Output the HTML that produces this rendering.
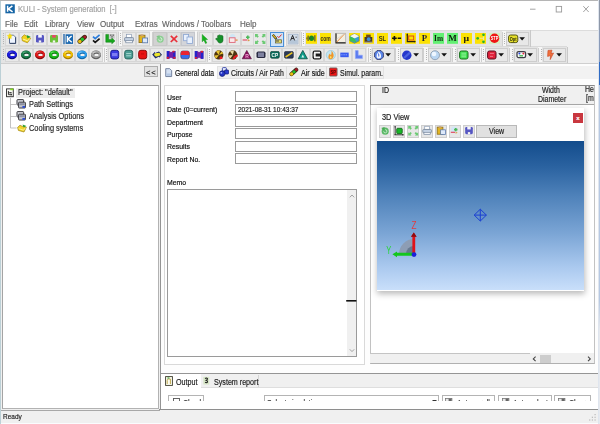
<!DOCTYPE html>
<html lang="en"><head><meta charset="utf-8"><title>KULI - System generation</title><style>
html,body{margin:0;padding:0}
body{width:600px;height:424px;overflow:hidden;position:relative;background:#f0f0f0;font-family:"Liberation Sans",sans-serif}
.b{position:absolute}
.t{position:absolute;white-space:nowrap;line-height:1;transform-origin:0 0;display:block;-webkit-text-stroke:.18px currentColor}
.i{position:absolute;overflow:visible;filter:blur(.35px)}
.g{position:absolute;width:1px;background:repeating-linear-gradient(#b4b4b4 0,#b4b4b4 1px,transparent 1px,transparent 2px)}
</style></head><body>
<div class="b" style="left:0px;top:0px;width:600px;height:30px;background:#fff;"></div>
<div class="b" style="left:0px;top:0px;width:600px;height:1px;background:#b5b5b5;"></div>
<svg class="i" style="left:5px;top:4px" width="10" height="10" viewBox="0 0 10 10"><rect x=".4" y=".3" width="9.4" height="9" fill="#1464a5"/><path d="M2.6 1.8V7.8M7.4 1.8L3.4 4.9L7.6 7.8" stroke="#fff" stroke-width="1.5" fill="none"/></svg>
<span class="t" style="left:18px;top:4.98px;font-size:9.0px;color:#a2a2a2;transform:scaleX(0.85);">KULI - System generation &nbsp;[-]</span>
<svg class="i" style="left:525px;top:2px" width="70" height="14" viewBox="0 0 70 14"><g stroke="#9a9a9a" stroke-width="0.9" fill="none"><path d="M5 7.2H10.5"/><rect x="31.2" y="4.4" width="5.4" height="5.6"/><path d="M58.3 4.2L63.7 10M63.7 4.2L58.3 10"/></g></svg>
<span class="t" style="left:4.7px;top:20.00px;font-size:8.5px;color:#666;transform:scaleX(0.94);">File</span>
<span class="t" style="left:24.2px;top:20.00px;font-size:8.5px;color:#666;transform:scaleX(0.94);">Edit</span>
<span class="t" style="left:45.2px;top:20.00px;font-size:8.5px;color:#666;transform:scaleX(0.94);">Library</span>
<span class="t" style="left:76.6px;top:20.00px;font-size:8.5px;color:#666;transform:scaleX(0.94);">View</span>
<span class="t" style="left:100px;top:20.00px;font-size:8.5px;color:#666;transform:scaleX(0.94);">Output</span>
<span class="t" style="left:134.6px;top:20.00px;font-size:8.5px;color:#666;transform:scaleX(0.94);">Extras</span>
<span class="t" style="left:162.4px;top:20.00px;font-size:8.5px;color:#666;transform:scaleX(0.94);">Windows / Toolbars</span>
<span class="t" style="left:240px;top:20.00px;font-size:8.5px;color:#666;transform:scaleX(0.94);">Help</span>
<div class="b" style="left:0px;top:30px;width:600px;height:33px;background:#f0f0f0;"></div>
<div class="b" style="left:0px;top:30px;width:531px;height:16.5px;background:#e4e4e4;"></div>
<div class="b" style="left:0px;top:46.5px;width:567px;height:16px;background:#e4e4e4;"></div>
<div class="b" style="left:0px;top:30px;width:600px;height:1px;background:#dcdcdc;"></div>
<div class="b" style="left:0px;top:62.6px;width:600px;height:1px;background:#cfcfcf;"></div>
<div class="b" style="left:0px;top:46.3px;width:567px;height:0.8px;background:#dadada;"></div>
<div class="b" style="left:530.4px;top:30px;width:1px;height:16.5px;background:#c8c8c8;"></div>
<div class="b" style="left:566.6px;top:46.5px;width:1px;height:16px;background:#c8c8c8;"></div>
<div class="b" style="left:118.6px;top:31px;width:3.6px;height:15px;background:#f6f6f6;"></div>
<div class="b" style="left:150.2px;top:31px;width:2.8px;height:15px;background:#f6f6f6;"></div>
<div class="b" style="left:195px;top:31px;width:2.4px;height:15px;background:#f6f6f6;"></div>
<div class="b" style="left:284.6px;top:31px;width:2.2px;height:15px;background:#f6f6f6;"></div>
<div class="b" style="left:300.6px;top:31px;width:4.6px;height:15px;background:#f6f6f6;"></div>
<div class="b" style="left:502.4px;top:31px;width:4px;height:15px;background:#f6f6f6;"></div>
<div class="b" style="left:103px;top:47.2px;width:4px;height:15px;background:#f6f6f6;"></div>
<div class="b" style="left:206.6px;top:47.2px;width:4.2px;height:15px;background:#f6f6f6;"></div>
<div class="b" style="left:367px;top:47.2px;width:3.6px;height:15px;background:#f6f6f6;"></div>
<div class="b" style="left:395px;top:47.2px;width:4.6px;height:15px;background:#f6f6f6;"></div>
<div class="b" style="left:423px;top:47.2px;width:4.6px;height:15px;background:#f6f6f6;"></div>
<div class="b" style="left:451.6px;top:47.2px;width:4.4px;height:15px;background:#f6f6f6;"></div>
<div class="b" style="left:480.4px;top:47.2px;width:4.6px;height:15px;background:#f6f6f6;"></div>
<div class="b" style="left:508.8px;top:47.2px;width:4.6px;height:15px;background:#f6f6f6;"></div>
<div class="b" style="left:537.6px;top:47.2px;width:4.6px;height:15px;background:#f6f6f6;"></div>
<div class="g" style="left:3px;top:33.0px;height:11px"></div>
<div class="b" style="left:5px;top:32.0px;width:14px;height:14px;background:#e9e9e9;border:0.6px solid #d6d6d6;box-sizing:border-box;"></div>
<svg class="i" style="left:7px;top:33.5px" width="10" height="11" viewBox="0 0 10 11"><path d="M2.5 1.2H6.6L8.6 3.2V9.4H2.5Z" fill="#eef4ff" stroke="#56688c" stroke-width=".9"/><path d="M8.6 3.4V9.4H3" stroke="#3a4a6a" stroke-width="1" fill="none"/><path d="M2.8 -.4L3.6 1.2L5.2 1.6L4 2.8L4.2 4.6L2.8 3.8L1.2 4.6L1.6 2.8L.4 1.6L2 1.2Z" fill="#f6dc10" stroke="#f6dc10" stroke-width=".6"/></svg>
<div class="b" style="left:19px;top:32.0px;width:14px;height:14px;background:#e9e9e9;border:0.6px solid #d6d6d6;box-sizing:border-box;"></div>
<svg class="i" style="left:21px;top:33.5px" width="10" height="11" viewBox="0 0 10 11"><path d="M.8 3.2L3.4 .8L5.6 2.2L9.8 4.2L6.4 8.8L1.4 6.8Z" fill="#f2d31e" stroke="#a88a10" stroke-width=".7"/><path d="M1.8 5L6.6 6.8L8.8 4.6" stroke="#fff8b0" stroke-width=".9" fill="none"/><path d="M5.6 1L9.6 2.8L6.4 4.6Z" fill="#23a02c"/></svg>
<div class="b" style="left:33px;top:32.0px;width:14px;height:14px;background:#e9e9e9;border:0.6px solid #d6d6d6;box-sizing:border-box;"></div>
<svg class="i" style="left:35px;top:33.5px" width="10" height="11" viewBox="0 0 10 11"><rect x="1" y="1" width="8" height="7.6" rx="1.4" fill="#5656c2"/><rect x="3.2" y="1" width="3.6" height="2.6" fill="#f4f4ff"/><rect x="3.8" y="6.4" width="2.4" height="2.2" fill="#f4f4f4"/></svg>
<div class="b" style="left:47px;top:32.0px;width:14px;height:14px;background:#e9e9e9;border:0.6px solid #d6d6d6;box-sizing:border-box;"></div>
<svg class="i" style="left:49px;top:33.5px" width="10" height="11" viewBox="0 0 10 11"><rect x="1" y="1" width="8" height="7.6" rx="1.4" fill="#6cc038"/><rect x="3.2" y="1" width="3.6" height="2.6" fill="#e8486a"/><rect x="3.8" y="6.4" width="2.4" height="2.2" fill="#f4f4f4"/></svg>
<div class="b" style="left:61px;top:32.0px;width:14px;height:14px;background:#e9e9e9;border:0.6px solid #d6d6d6;box-sizing:border-box;"></div>
<svg class="i" style="left:63px;top:33.5px" width="10" height="11" viewBox="0 0 10 11"><rect x=".4" y="0" width="1.2" height="10.2" fill="#0f5aa5"/><rect x="2.6" y=".3" width="7.4" height="9.6" fill="#1767b0"/><path d="M4.4 2V8.2M8.6 2L5 5.1L8.8 8.2" stroke="#fff" stroke-width="1.4" fill="none"/></svg>
<div class="b" style="left:75px;top:32.0px;width:14px;height:14px;background:#e9e9e9;border:0.6px solid #d6d6d6;box-sizing:border-box;"></div>
<svg class="i" style="left:77px;top:33.5px" width="10" height="11" viewBox="0 0 10 11"><path d="M2.7 7.5L7.7 3" stroke="#3a2a12" stroke-width="4.4" stroke-linecap="round"/><circle cx="7.8" cy="2.9" r="1.5" fill="#a8162a"/><circle cx="5.3" cy="5.2" r="1.8" fill="#22c02e"/><circle cx="2.8" cy="7.5" r="1.8" fill="#e8c014"/></svg>
<div class="b" style="left:89px;top:32.0px;width:14px;height:14px;background:#e9e9e9;border:0.6px solid #d6d6d6;box-sizing:border-box;"></div>
<svg class="i" style="left:91px;top:33.5px" width="10" height="11" viewBox="0 0 10 11"><path d="M2 2.6L4.2 4.6L8.6 .9" stroke="#2a7cdc" stroke-width="1.7" fill="none"/><path d="M2 6.3L4.2 8.3L8.6 4.6" stroke="#151515" stroke-width="1.7" fill="none"/></svg>
<div class="b" style="left:103px;top:32.0px;width:14px;height:14px;background:#e9e9e9;border:0.6px solid #d6d6d6;box-sizing:border-box;"></div>
<svg class="i" style="left:105px;top:33.5px" width="10" height="11" viewBox="0 0 10 11"><rect x="4.4" y="0" width="5.2" height="4.6" fill="#c4c4c4"/><path d="M5 .6h1.4v1.4H5zM7.6 .6H9V2H7.6zM6.3 2h1.4v1.4H6.3z" fill="#7a7a7a"/><path d="M.8 .4H3.6V5.6H6.8V4L10 6.9L6.8 9.8V8.2H.8Z" fill="#17a81d" stroke="#0c7a12" stroke-width=".5"/></svg>
<div class="b" style="left:118.3px;top:31.5px;width:1px;height:14px;background:#cfcfcf;"></div>
<div class="g" style="left:120px;top:33.0px;height:11px"></div>
<div class="b" style="left:122px;top:32.0px;width:14px;height:14px;background:#e9e9e9;border:0.6px solid #d6d6d6;box-sizing:border-box;"></div>
<svg class="i" style="left:124px;top:33.5px" width="10" height="11" viewBox="0 0 10 11"><rect x="2.6" y=".3" width="5" height="3.6" fill="#fff" stroke="#8b9bb3" stroke-width=".7"/><rect x=".6" y="3.6" width="9" height="3.6" rx=".8" fill="#c5d2e3" stroke="#69798f" stroke-width=".7"/><rect x="1.8" y="6.6" width="6.6" height="2.2" fill="#f1f4f9" stroke="#7a8aa0" stroke-width=".7"/></svg>
<div class="b" style="left:136px;top:32.0px;width:14px;height:14px;background:#e9e9e9;border:0.6px solid #d6d6d6;box-sizing:border-box;"></div>
<svg class="i" style="left:138px;top:33.5px" width="10" height="11" viewBox="0 0 10 11"><rect x="1" y="1.2" width="6" height="7.4" fill="#e2b422" stroke="#8c6c12" stroke-width=".8"/><rect x="2.6" y=".4" width="2.8" height="1.8" fill="#caa06a"/><rect x="4.6" y="4" width="5" height="4.8" fill="#dde9fa" stroke="#5878ae" stroke-width=".8"/></svg>
<div class="b" style="left:151.5px;top:31.5px;width:1px;height:14px;background:#cfcfcf;"></div>
<div class="b" style="left:153.5px;top:32px;width:13px;height:14px;background:#d4d4d4;border:0.6px solid #cfcfcf;box-sizing:border-box;"></div>
<div class="b" style="left:181px;top:32px;width:13.4px;height:14px;background:#d3d5da;border:0.6px solid #c6c8cc;box-sizing:border-box;"></div>
<div class="b" style="left:167.5px;top:32px;width:13px;height:14px;background:#e0e0e0;border:0.6px solid #d2d2d2;box-sizing:border-box;"></div>
<div class="b" style="left:153px;top:32.0px;width:14px;height:14px;background:#d2d2d2;border:0.6px solid #c8c8c8;box-sizing:border-box;"></div>
<svg class="i" style="left:155px;top:33.5px" width="10" height="11" viewBox="0 0 10 11"><circle cx="5.2" cy="5.2" r="3.5" fill="#8ccf92"/><path d="M3.7 5.4A1.6 1.6 0 1 0 5.2 3.7" stroke="#d8f0da" stroke-width="1" fill="none"/><path d="M1.2 2.2L4.6 1.2L4.2 4.2Z" fill="#7cc684"/></svg>
<div class="b" style="left:167px;top:32.0px;width:14px;height:14px;background:#e0e0e0;border:0.6px solid #d0d0d0;box-sizing:border-box;"></div>
<svg class="i" style="left:169px;top:33.5px" width="10" height="11" viewBox="0 0 10 11"><path d="M1.8 1.8L8.2 8M8.2 1.8L1.8 8" stroke="#e8303a" stroke-width="1.7" fill="none"/></svg>
<div class="b" style="left:181px;top:32.0px;width:14px;height:14px;background:#d3d5da;border:0.6px solid #c4c6cc;box-sizing:border-box;"></div>
<svg class="i" style="left:183px;top:33.5px" width="10" height="11" viewBox="0 0 10 11"><rect x=".6" y=".5" width="5" height="6.2" fill="#e9f1fd" stroke="#8aa5d2" stroke-width=".8"/><rect x="4" y="3" width="5.4" height="6.4" fill="#e9f1fd" stroke="#8aa5d2" stroke-width=".8"/></svg>
<div class="b" style="left:196.5px;top:31.5px;width:1px;height:14px;background:#cfcfcf;"></div>
<div class="b" style="left:199px;top:32.0px;width:14px;height:14px;background:#e9e9e9;border:0.6px solid #d6d6d6;box-sizing:border-box;"></div>
<svg class="i" style="left:201px;top:33.5px" width="10" height="11" viewBox="0 0 10 11"><path d="M1.2 .4V7.8L2.9 6.2L4.5 9.6L5.8 9L4.3 5.7L6.6 5.5Z" fill="#16b31c" stroke="#0d8a14" stroke-width=".4"/></svg>
<div class="b" style="left:213px;top:32.0px;width:14px;height:14px;background:#e9e9e9;border:0.6px solid #d6d6d6;box-sizing:border-box;"></div>
<svg class="i" style="left:215px;top:33.5px" width="10" height="11" viewBox="0 0 10 11"><path d="M2.6 3.2V1.8Q3.2 .6 4 1.6Q4.6 -.2 5.4 1.4Q6.2 .2 6.8 1.8Q7.6 1.2 8 2.6V6.4Q7.8 8.8 5.6 9H4.6Q3 8.6 2.4 6.8L.6 5Q.8 3.6 2.6 4.6Z" fill="#17912a" stroke="#0b5a16" stroke-width=".5"/></svg>
<div class="b" style="left:227px;top:32.0px;width:14px;height:14px;background:#e9e9e9;border:0.6px solid #d6d6d6;box-sizing:border-box;"></div>
<svg class="i" style="left:229px;top:33.5px" width="10" height="11" viewBox="0 0 10 11"><circle cx="3.6" cy="2.6" r="2.6" fill="#cfe6f5"/><rect x=".3" y="3.8" width="5.8" height="4.6" fill="#fbe9ec" stroke="#de6476" stroke-width=".9"/><path d="M6.4 6.1H8.6" stroke="#e08a3a" stroke-width="1.2"/></svg>
<div class="b" style="left:241px;top:32.0px;width:14px;height:14px;background:#e9e9e9;border:0.6px solid #d6d6d6;box-sizing:border-box;"></div>
<svg class="i" style="left:243px;top:33.5px" width="10" height="11" viewBox="0 0 10 11"><path d="M-.4 6H4.4" stroke="#e2485c" stroke-width="1.1"/><path d="M4.8 1.4V5M3 3.2H6.6" stroke="#4cb85a" stroke-width="1.6"/><path d="M4.8 5L7 6.6L4.8 7.6Z" fill="#d8a04a"/></svg>
<div class="b" style="left:253.2px;top:32.0px;width:14px;height:14px;background:#e9e9e9;border:0.6px solid #d6d6d6;box-sizing:border-box;"></div>
<svg class="i" style="left:255.2px;top:33.5px" width="10" height="11" viewBox="0 0 10 11"><g fill="#6cca74"><path d="M0 0H3.4L2.4 1L3.8 2.4L2.4 3.8L1 2.4L0 3.4Z"/><path d="M10.4 0H7L8 1L6.6 2.4L8 3.8L9.4 2.4L10.4 3.4Z"/><path d="M0 10H3.4L2.4 9L3.8 7.6L2.4 6.2L1 7.6L0 6.6Z"/><path d="M10.4 10H7L8 9L6.6 7.6L8 6.2L9.4 7.6L10.4 6.6Z"/></g></svg>
<div class="b" style="left:269.5px;top:31.5px;width:14px;height:15px;background:#cfe4f7;border:1px solid #4a90d9;box-sizing:border-box;"></div>
<svg class="i" style="left:271.5px;top:33.5px" width="10" height="11" viewBox="0 0 10 11"><path d="M.8 .8L4.4 5" stroke="#2a2a1a" stroke-width="2.4"/><path d="M1 1L4 4.4" stroke="#e4bb22" stroke-width="1.3"/><path d="M5.4 2.2L6.8 3.6L9.6 .5" stroke="#e02626" stroke-width="1" fill="none"/><rect x="3.4" y="5.8" width="6.2" height="3.2" fill="#ece070" stroke="#5a5a3a" stroke-width=".7"/><path d="M4 7H7" stroke="#333" stroke-width=".9"/></svg>
<div class="b" style="left:285.5px;top:31.5px;width:1px;height:14px;background:#cfcfcf;"></div>
<div class="b" style="left:286px;top:32.0px;width:14px;height:14px;background:#e9e9e9;border:0.6px solid #d6d6d6;box-sizing:border-box;"></div>
<svg class="i" style="left:288px;top:33.5px" width="10" height="11" viewBox="0 0 10 11"><rect x=".2" y=".2" width="9.8" height="9.8" fill="#d6dfea" stroke="#9aacc4" stroke-width=".7"/><rect x=".6" y="6" width="9" height="3.6" fill="#b6c6d8"/><path d="M2.6 6.4L4.6 1.4L6.6 6.4M3.4 4.6H5.8" stroke="#111" stroke-width=".9" fill="none"/><path d="M7.4 3.2H9" stroke="#333" stroke-width=".7"/></svg>
<div class="b" style="left:300.5px;top:31.5px;width:1px;height:14px;background:#cfcfcf;"></div>
<div class="g" style="left:302.5px;top:33.0px;height:11px"></div>
<svg class="i" style="left:305.5px;top:33.0px" width="12" height="12" viewBox="0 0 12 12"><rect x="0" y="0" width="11" height="10.8" fill="#fce203"/><g transform="translate(-.5 0)"><ellipse cx="6" cy="5.3" rx="2.5" ry="2.7" fill="#19892b"/><path d="M2.6 2.6V8M9.4 2.2V8.4" stroke="#3a3a2a" stroke-width="1"/><path d="M1.4 4.4v2M3.6 5.3h1" stroke="#3a3a2a" stroke-width=".8"/></g></svg>
<svg class="i" style="left:319.5px;top:33.0px" width="12" height="12" viewBox="0 0 12 12"><rect x="0" y="0" width="11" height="10.8" fill="#fce203"/><g transform="translate(-.5 0)"><text x="1" y="7.6" font-size="7.6" font-weight="bold" fill="#3a3420" font-family="Liberation Sans, sans-serif" textLength="10.2" lengthAdjust="spacingAndGlyphs">com</text></g></svg>
<svg class="i" style="left:334.5px;top:33.0px" width="12" height="12" viewBox="0 0 12 12"><rect x="0" y="0" width="11" height="10.6" fill="#f3efe2"/><path d="M1 .2V9.8H10.8" stroke="#161616" stroke-width="1.2" fill="none"/><path d="M1 .4H10.6V9.8" stroke="#8a8a8a" stroke-width=".5" fill="none"/><path d="M1.6 9.2L9.6 .8" stroke="#e8873a" stroke-width="1"/><path d="M1.6 6L9.6 .8" stroke="#d8cfc0" stroke-width=".8"/></svg>
<svg class="i" style="left:348.5px;top:33.0px" width="12" height="12" viewBox="0 0 12 12"><rect x="0" y="0" width="11" height="10.8" fill="#fce203"/><g transform="translate(-.5 0)"><path d="M6 .8L10.6 3.2V8L6 10.2L1.4 8V3.2Z" fill="#38a0d8" stroke="#7a7a4a" stroke-width=".6"/><path d="M6 .8L10.6 3.2L6 5.6L1.4 3.2Z" fill="#f6f6ee"/><path d="M1.4 3.2L6 5.6L8 9.2L1.4 8Z" fill="#3dbf58"/></g></svg>
<svg class="i" style="left:362.5px;top:33.0px" width="12" height="12" viewBox="0 0 12 12"><rect x="0" y="0" width="11" height="10.8" fill="#fce203"/><g transform="translate(-.5 0)"><rect x="2" y="4" width="7.8" height="5.6" fill="#4a3a26"/><rect x="3.6" y="1.6" width="4.6" height="2.6" fill="#6a4a22"/><circle cx="6.2" cy="6.2" r="1.9" fill="#3a8cdc"/><path d="M2 9.2H9.8" stroke="#c8c8c8" stroke-width=".8"/></g></svg>
<svg class="i" style="left:376.5px;top:33.0px" width="12" height="12" viewBox="0 0 12 12"><rect x="0" y="0" width="11" height="10.8" fill="#fce203"/><g transform="translate(-.5 0)"><text x="2.2" y="7.8" font-size="6.6" font-weight="bold" fill="#3a3016" font-family="Liberation Sans, sans-serif" textLength="7.4" lengthAdjust="spacingAndGlyphs">SL</text></g></svg>
<svg class="i" style="left:390.5px;top:33.0px" width="12" height="12" viewBox="0 0 12 12"><rect x="0" y="0" width="11" height="10.8" fill="#fce203"/><g transform="translate(-.5 0)"><path d="M1.6 5.3H6.2M3.9 3V7.6M7.2 5.3H10.6" stroke="#111" stroke-width="1.6"/></g></svg>
<svg class="i" style="left:404.5px;top:33.0px" width="12" height="12" viewBox="0 0 12 12"><rect x="0" y="0" width="11" height="10.8" fill="#fce203"/><g transform="translate(-.5 0)"><path d="M2.8 .8V8.6H10.8" stroke="#2a2410" stroke-width="1.2" fill="none"/><rect x="4.2" y="3" width="5" height="4" fill="none" stroke="#e03c1c" stroke-width=".9"/><path d="M1.8 2.2L2.8 .4L3.8 2.2M9.6 7.6L11.2 8.6L9.6 9.6" fill="#2a2410"/></g></svg>
<svg class="i" style="left:418.5px;top:33.0px" width="12" height="12" viewBox="0 0 12 12"><rect x="0" y="0" width="11" height="10.8" fill="#fce203"/><g transform="translate(-.5 0)"><text x="3.2" y="8.2" font-size="8.2" font-weight="bold" fill="#1c1c3c" font-family="Liberation Serif, serif" textLength="5.4" lengthAdjust="spacingAndGlyphs">P</text></g></svg>
<svg class="i" style="left:432.5px;top:33.0px" width="12" height="12" viewBox="0 0 12 12"><rect x="0" y="0" width="11" height="10.8" fill="#62f072"/><g transform="translate(-.5 0)"><text x="1.6" y="8" font-size="7.6" font-weight="bold" fill="#0c260c" font-family="Liberation Serif, serif" textLength="9" lengthAdjust="spacingAndGlyphs">Im</text></g></svg>
<svg class="i" style="left:446.5px;top:33.0px" width="12" height="12" viewBox="0 0 12 12"><rect x="0" y="0" width="11" height="10.8" fill="#62f072"/><g transform="translate(-.5 0)"><text x="1.8" y="8.2" font-size="8.2" font-weight="bold" fill="#0c200c" font-family="Liberation Serif, serif" textLength="8.6" lengthAdjust="spacingAndGlyphs">M</text></g></svg>
<svg class="i" style="left:460.5px;top:33.0px" width="12" height="12" viewBox="0 0 12 12"><rect x="0" y="0" width="11" height="10.8" fill="#fce203"/><g transform="translate(-.5 0)"><text x="3" y="7.6" font-size="9" font-weight="bold" fill="#1a1a10" font-family="Liberation Serif, serif" textLength="5.6" lengthAdjust="spacingAndGlyphs">μ</text></g></svg>
<svg class="i" style="left:474.5px;top:33.0px" width="12" height="12" viewBox="0 0 12 12"><rect x="0" y="0" width="11" height="10.8" fill="#fce203"/><g transform="translate(-.5 0)"><path d="M3.2 5.3H9M9 1.8V8.8" stroke="#ecec9c" stroke-width="1.1"/><circle cx="3.2" cy="5.3" r="1.35" fill="#2bb32b"/><circle cx="9" cy="1.8" r="1.35" fill="#2bb32b"/><circle cx="9" cy="8.8" r="1.35" fill="#2bb32b"/></g></svg>
<svg class="i" style="left:488.5px;top:33.0px" width="12" height="12" viewBox="0 0 12 12"><rect x="0" y="0" width="11" height="10.8" fill="#d3efc3"/><g transform="translate(-.5 0)"><circle cx="6" cy="5.3" r="4.7" fill="#f01414"/><text x="2.2" y="6.9" font-size="4.6" font-weight="bold" fill="#fff" font-family="Liberation Sans, sans-serif" textLength="7.6" lengthAdjust="spacingAndGlyphs">STP</text></g></svg>
<div class="b" style="left:502px;top:31.5px;width:1px;height:14px;background:#cfcfcf;"></div>
<div class="g" style="left:504px;top:33.0px;height:11px"></div>
<div class="b" style="left:506px;top:32.0px;width:23px;height:14px;background:#e8e8e8;border:0.6px solid #cdcdcd;box-sizing:border-box;"></div>
<svg class="i" style="left:508px;top:33.5px" width="10" height="11" viewBox="0 0 10 11"><rect x=".6" y="1" width="9.2" height="7.6" rx="2" fill="#e6e02a" stroke="#56560e" stroke-width="1"/><text x="1.8" y="6.6" font-size="4.6" font-weight="bold" fill="#2a2a0a" font-family="Liberation Sans, sans-serif" textLength="6.8" lengthAdjust="spacingAndGlyphs">Opt</text></svg>
<svg class="i" style="left:519.3px;top:37.1px" width="7" height="4" viewBox="0 0 7 4"><path d="M0.3 0.2H6L3.15 3.4Z" fill="#111"/></svg>
<div class="g" style="left:3px;top:49.0px;height:11px"></div>
<div class="b" style="left:5px;top:48.0px;width:14px;height:14px;background:#e9e9e9;border:0.6px solid #d6d6d6;box-sizing:border-box;"></div>
<svg class="i" style="left:7px;top:49.5px" width="10" height="11" viewBox="0 0 10 11"><ellipse cx="5" cy="4.9" rx="5" ry="4.3" fill="#0b0b86"/><ellipse cx="5" cy="4.3" rx="4.8" ry="3.6" fill="#1c1ce0"/><ellipse cx="3.6" cy="2.6" rx="2.2" ry="1" fill="#7a7aff" opacity=".5"/><ellipse cx="5.3" cy="4.3" rx="2.7" ry="1.7" fill="#0b0b86"/><ellipse cx="5.5" cy="4.9" rx="2.3" ry="1.2" fill="#f2f2f2"/></svg>
<div class="b" style="left:19px;top:48.0px;width:14px;height:14px;background:#e9e9e9;border:0.6px solid #d6d6d6;box-sizing:border-box;"></div>
<svg class="i" style="left:21px;top:49.5px" width="10" height="11" viewBox="0 0 10 11"><ellipse cx="5" cy="4.9" rx="5" ry="4.3" fill="#0b4a2b"/><ellipse cx="5" cy="4.3" rx="4.8" ry="3.6" fill="#1d8350"/><ellipse cx="3.6" cy="2.6" rx="2.2" ry="1" fill="#7ad0a0" opacity=".5"/><ellipse cx="5.3" cy="4.3" rx="2.7" ry="1.7" fill="#0b4a2b"/><ellipse cx="5.5" cy="4.9" rx="2.3" ry="1.2" fill="#f2f2f2"/></svg>
<div class="b" style="left:33px;top:48.0px;width:14px;height:14px;background:#e9e9e9;border:0.6px solid #d6d6d6;box-sizing:border-box;"></div>
<svg class="i" style="left:35px;top:49.5px" width="10" height="11" viewBox="0 0 10 11"><ellipse cx="5" cy="4.9" rx="5" ry="4.3" fill="#8a0b0b"/><ellipse cx="5" cy="4.3" rx="4.8" ry="3.6" fill="#e01c1c"/><ellipse cx="3.6" cy="2.6" rx="2.2" ry="1" fill="#ff9a9a" opacity=".5"/><ellipse cx="5.3" cy="4.3" rx="2.7" ry="1.7" fill="#8a0b0b"/><ellipse cx="5.5" cy="4.9" rx="2.3" ry="1.2" fill="#f2f2f2"/></svg>
<div class="b" style="left:47px;top:48.0px;width:14px;height:14px;background:#e9e9e9;border:0.6px solid #d6d6d6;box-sizing:border-box;"></div>
<svg class="i" style="left:49px;top:49.5px" width="10" height="11" viewBox="0 0 10 11"><ellipse cx="5" cy="4.9" rx="5" ry="4.3" fill="#0b7a0b"/><ellipse cx="5" cy="4.3" rx="4.8" ry="3.6" fill="#1cbb1c"/><ellipse cx="3.6" cy="2.6" rx="2.2" ry="1" fill="#9aff9a" opacity=".5"/><ellipse cx="5.3" cy="4.3" rx="2.7" ry="1.7" fill="#0b7a0b"/><ellipse cx="5.5" cy="4.9" rx="2.3" ry="1.2" fill="#f2f2f2"/></svg>
<div class="b" style="left:61px;top:48.0px;width:14px;height:14px;background:#e9e9e9;border:0.6px solid #d6d6d6;box-sizing:border-box;"></div>
<svg class="i" style="left:63px;top:49.5px" width="10" height="11" viewBox="0 0 10 11"><ellipse cx="5" cy="4.9" rx="5" ry="4.3" fill="#a87a00"/><ellipse cx="5" cy="4.3" rx="4.8" ry="3.6" fill="#f0c000"/><ellipse cx="3.6" cy="2.6" rx="2.2" ry="1" fill="#fff09a" opacity=".5"/><ellipse cx="5.3" cy="4.3" rx="2.7" ry="1.7" fill="#a87a00"/><ellipse cx="5.5" cy="4.9" rx="2.3" ry="1.2" fill="#f2f2f2"/></svg>
<div class="b" style="left:75px;top:48.0px;width:14px;height:14px;background:#e9e9e9;border:0.6px solid #d6d6d6;box-sizing:border-box;"></div>
<svg class="i" style="left:77px;top:49.5px" width="10" height="11" viewBox="0 0 10 11"><ellipse cx="5" cy="4.9" rx="5" ry="4.3" fill="#126aac"/><ellipse cx="5" cy="4.3" rx="4.8" ry="3.6" fill="#2c9cec"/><ellipse cx="3.6" cy="2.6" rx="2.2" ry="1" fill="#b0e0ff" opacity=".5"/><ellipse cx="5.3" cy="4.3" rx="2.7" ry="1.7" fill="#126aac"/><ellipse cx="5.5" cy="4.9" rx="2.3" ry="1.2" fill="#f2f2f2"/></svg>
<div class="b" style="left:89px;top:48.0px;width:14px;height:14px;background:#e9e9e9;border:0.6px solid #d6d6d6;box-sizing:border-box;"></div>
<svg class="i" style="left:91px;top:49.5px" width="10" height="11" viewBox="0 0 10 11"><ellipse cx="5" cy="4.9" rx="5" ry="4.3" fill="#5e5e5e"/><ellipse cx="5" cy="4.3" rx="4.8" ry="3.6" fill="#a4a4a4"/><ellipse cx="3.6" cy="2.6" rx="2.2" ry="1" fill="#e8e8e8" opacity=".5"/><ellipse cx="5.3" cy="4.3" rx="2.7" ry="1.7" fill="#5e5e5e"/><ellipse cx="5.5" cy="4.9" rx="2.3" ry="1.2" fill="#f2f2f2"/></svg>
<div class="b" style="left:103.5px;top:47.5px;width:1px;height:14px;background:#cfcfcf;"></div>
<div class="g" style="left:105.5px;top:49.0px;height:11px"></div>
<div class="b" style="left:108px;top:48.0px;width:14px;height:14px;background:#e9e9e9;border:0.6px solid #d6d6d6;box-sizing:border-box;"></div>
<svg class="i" style="left:110px;top:49.5px" width="10" height="11" viewBox="0 0 10 11"><rect x=".7" y=".3" width="8" height="8.6" rx="2.2" fill="#3a3ae2" stroke="#1c1c8e" stroke-width="1"/><rect x="2" y="3" width="5.4" height="3.2" fill="#7c7cf2"/></svg>
<div class="b" style="left:122px;top:48.0px;width:14px;height:14px;background:#e9e9e9;border:0.6px solid #d6d6d6;box-sizing:border-box;"></div>
<svg class="i" style="left:124px;top:49.5px" width="10" height="11" viewBox="0 0 10 11"><rect x=".7" y=".3" width="8" height="8.6" rx="2.2" fill="#4a9c92" stroke="#2c6a62" stroke-width="1"/><path d="M2.2 3.6H7.2M2.2 5.8H7.2" stroke="#b4e0d8" stroke-width=".9"/></svg>
<div class="b" style="left:136px;top:48.0px;width:14px;height:14px;background:#e9e9e9;border:0.6px solid #d6d6d6;box-sizing:border-box;"></div>
<svg class="i" style="left:138px;top:49.5px" width="10" height="11" viewBox="0 0 10 11"><rect x=".7" y=".3" width="8" height="8.6" rx="2.2" fill="#e81212" stroke="#8c0c0c" stroke-width="1"/><rect x="3" y="3.4" width="3" height="1" fill="#c00a0a"/></svg>
<div class="b" style="left:150px;top:48.0px;width:14px;height:14px;background:#e9e9e9;border:0.6px solid #d6d6d6;box-sizing:border-box;"></div>
<svg class="i" style="left:152px;top:49.5px" width="10" height="11" viewBox="0 0 10 11"><path d="M.2 4.4L3 1.8V3L7 1.6L10 4.8L7.2 7.8V6.4L3.4 8.4Z" fill="#1e2a6a"/><path d="M2.8 3.2L7.4 2.8L8.8 5.2L4 6.8L2 5Z" fill="#ece62a"/></svg>
<div class="b" style="left:164px;top:48.0px;width:14px;height:14px;background:#e9e9e9;border:0.6px solid #d6d6d6;box-sizing:border-box;"></div>
<svg class="i" style="left:166px;top:49.5px" width="10" height="11" viewBox="0 0 10 11"><path d="M.8 1H3.4L5 2.2L6.8 1H9.4V8.8H6.8L5 7.6L3.4 8.8H.8Z" fill="#7420a8"/><rect x=".8" y="1" width="2.2" height="7.8" fill="#2424c8"/><rect x="7.2" y="1" width="2.2" height="7.8" fill="#2424c8"/><rect x=".8" y="6.8" width="2" height="2" fill="#e0202a"/><rect x="7.4" y="6.8" width="2" height="2" fill="#e0202a"/><rect x="6.6" y=".8" width="2" height="1.6" fill="#e0202a"/></svg>
<div class="b" style="left:178px;top:48.0px;width:14px;height:14px;background:#e9e9e9;border:0.6px solid #d6d6d6;box-sizing:border-box;"></div>
<svg class="i" style="left:180px;top:49.5px" width="10" height="11" viewBox="0 0 10 11"><rect x=".8" y="1" width="8.6" height="7.8" rx="2" fill="#3a6cea" stroke="#2a2a5a" stroke-width=".6"/><path d="M.8 5V3Q.8 1 2.8 1H7.4Q9.4 1 9.4 3V5Z" fill="#ea2430"/></svg>
<div class="b" style="left:192px;top:48.0px;width:14px;height:14px;background:#e9e9e9;border:0.6px solid #d6d6d6;box-sizing:border-box;"></div>
<svg class="i" style="left:194px;top:49.5px" width="10" height="11" viewBox="0 0 10 11"><path d="M.8 1H3.4L5 2.2L6.8 1H9.4V8.8H6.8L5 7.6L3.4 8.8H.8Z" fill="#7420a8"/><rect x=".8" y="1" width="2.4" height="7.8" fill="#2424c8"/><rect x="7" y="1" width="2.4" height="7.8" fill="#2424c8"/><rect x="6.8" y=".8" width="2.2" height="1.8" fill="#e0202a"/><rect x="1" y="7" width="1.8" height="1.8" fill="#e0202a"/></svg>
<div class="b" style="left:207px;top:47.5px;width:1px;height:14px;background:#cfcfcf;"></div>
<div class="g" style="left:209px;top:49.0px;height:11px"></div>
<div class="b" style="left:212px;top:48.0px;width:14px;height:14px;background:#e9e9e9;border:0.6px solid #d6d6d6;box-sizing:border-box;"></div>
<svg class="i" style="left:214px;top:49.5px" width="10" height="11" viewBox="0 0 10 11"><circle cx="4.8" cy="4.9" r="4.6" fill="#4e3410"/><path d="M4.8 4.9L2 1.4A4.4 4.4 0 0 1 6 .6ZM4.8 4.9L.4 5.6A4.4 4.4 0 0 0 2.4 8.6ZM4.8 4.9L9.2 3.6A4.4 4.4 0 0 0 7.6 1.4Z" fill="#e8c432"/><path d="M5.6 9V7Q7 5.4 8.4 7V9Z" fill="#e81c24"/></svg>
<div class="b" style="left:226px;top:48.0px;width:14px;height:14px;background:#e9e9e9;border:0.6px solid #d6d6d6;box-sizing:border-box;"></div>
<svg class="i" style="left:228px;top:49.5px" width="10" height="11" viewBox="0 0 10 11"><circle cx="4.8" cy="4.9" r="4.6" fill="#4e3410"/><path d="M4.8 4.9L2 1.4A4.4 4.4 0 0 1 6 .6ZM4.8 4.9L.4 5.6A4.4 4.4 0 0 0 2.4 8.6Z" fill="#e8d8a0"/><path d="M4.6 9.2Q5 6 9.6 4.6L9.8 6.4Q7 7 6.6 9.2Z" fill="#e81c24"/></svg>
<div class="b" style="left:240px;top:48.0px;width:14px;height:14px;background:#e9e9e9;border:0.6px solid #d6d6d6;box-sizing:border-box;"></div>
<svg class="i" style="left:242px;top:49.5px" width="10" height="11" viewBox="0 0 10 11"><path d="M4.8 .4L9.4 8.8H.2Z" fill="#8c0c5c" stroke="#4a0a34" stroke-width=".6"/><text x="3.2" y="8" font-size="5" font-weight="bold" fill="#f0a8d4" font-family="Liberation Sans, sans-serif">R</text></svg>
<div class="b" style="left:254px;top:48.0px;width:14px;height:14px;background:#e9e9e9;border:0.6px solid #d6d6d6;box-sizing:border-box;"></div>
<svg class="i" style="left:256px;top:49.5px" width="10" height="11" viewBox="0 0 10 11"><rect x=".5" y="1.6" width="9" height="6.4" rx="1.6" fill="#2a2c42"/><path d="M3 2.6V7M5 2.6V7M7 2.6V7" stroke="#b8bce0" stroke-width="1.2"/></svg>
<div class="b" style="left:268px;top:48.0px;width:14px;height:14px;background:#e9e9e9;border:0.6px solid #d6d6d6;box-sizing:border-box;"></div>
<svg class="i" style="left:270px;top:49.5px" width="10" height="11" viewBox="0 0 10 11"><rect x=".5" y="1.4" width="8.8" height="6.8" rx="1.4" fill="#0b6e5e" stroke="#0a3c32" stroke-width=".7"/><text x="1.6" y="6.6" font-size="4.8" font-weight="bold" fill="#fff" font-family="Liberation Sans, sans-serif" textLength="6.6" lengthAdjust="spacingAndGlyphs">CP</text></svg>
<div class="b" style="left:282px;top:48.0px;width:14px;height:14px;background:#e9e9e9;border:0.6px solid #d6d6d6;box-sizing:border-box;"></div>
<svg class="i" style="left:284px;top:49.5px" width="10" height="11" viewBox="0 0 10 11"><rect x=".5" y="1.4" width="8.8" height="6.8" rx="1.2" fill="#2a3a58" stroke="#1a1a2a" stroke-width=".6"/><path d="M1.6 7L8.4 2.6" stroke="#ecc422" stroke-width="1.6"/></svg>
<div class="b" style="left:296px;top:48.0px;width:14px;height:14px;background:#e9e9e9;border:0.6px solid #d6d6d6;box-sizing:border-box;"></div>
<svg class="i" style="left:298px;top:49.5px" width="10" height="11" viewBox="0 0 10 11"><path d="M4.8 .4L9.4 8.8H.2Z" fill="#0c9c8a" stroke="#0a4a40" stroke-width=".8"/><path d="M3.4 7.4L4.8 4.4L6.2 7.4Z" fill="#d8f4ee"/></svg>
<div class="b" style="left:310px;top:48.0px;width:14px;height:14px;background:#e9e9e9;border:0.6px solid #d6d6d6;box-sizing:border-box;"></div>
<svg class="i" style="left:312px;top:49.5px" width="10" height="11" viewBox="0 0 10 11"><rect x=".5" y=".5" width="9" height="9" rx="2.2" fill="#1c1c1c"/><path d="M8 2.7H2.8V7.3H8" stroke="#f4f4f4" stroke-width="1.7" fill="none"/><path d="M2.4 3.4V6.6" stroke="#f4f4f4" stroke-width="1.4"/></svg>
<div class="b" style="left:324px;top:48.0px;width:14px;height:14px;background:#e9e9e9;border:0.6px solid #d6d6d6;box-sizing:border-box;"></div>
<svg class="i" style="left:326px;top:49.5px" width="10" height="11" viewBox="0 0 10 11"><circle cx="4.8" cy="5" r="4.6" fill="#c2e5f1" stroke="#8cc2da" stroke-width=".6"/><path d="M5.4 .8Q8.4 4 7.4 7Q6.6 9.2 4.6 9.2Q2.2 9 2.4 6.4Q2.6 4.6 4 3.6Q4 5 5 5.2Q6 3.4 5.4 .8Z" fill="#f0962a"/><path d="M5 6Q6.2 7.2 5 8.6Q3.6 8.4 3.8 7Q4.2 6 5 6Z" fill="#fbe26a"/></svg>
<div class="b" style="left:338px;top:48.0px;width:14px;height:14px;background:#e9e9e9;border:0.6px solid #d6d6d6;box-sizing:border-box;"></div>
<svg class="i" style="left:340px;top:49.5px" width="10" height="11" viewBox="0 0 10 11"><rect x=".3" y="2.6" width="8.4" height="4.6" fill="#3a5cf0"/><path d="M1.2 4.8H7.8" stroke="#9cb4ff" stroke-width=".8" stroke-dasharray="1.4 .8"/></svg>
<div class="b" style="left:352px;top:48.0px;width:14px;height:14px;background:#e9e9e9;border:0.6px solid #d6d6d6;box-sizing:border-box;"></div>
<svg class="i" style="left:354px;top:49.5px" width="10" height="11" viewBox="0 0 10 11"><path d="M1.4 .6H4.2V5.2H8.4V8.6H1.4Z" fill="#5c7cf0" stroke="#8ca4f8" stroke-width=".6"/></svg>
<div class="b" style="left:367.5px;top:47.5px;width:1px;height:14px;background:#cfcfcf;"></div>
<div class="g" style="left:369.5px;top:49.0px;height:11px"></div>
<div class="b" style="left:371.5px;top:48.0px;width:23px;height:14px;background:#e8e8e8;border:0.6px solid #cdcdcd;box-sizing:border-box;"></div>
<svg class="i" style="left:373.5px;top:49.5px" width="10" height="11" viewBox="0 0 10 11"><path d="M3 .6H7L9.4 3V7L7 9.4H3L.6 7V3Z" fill="#5a86ea" stroke="#2a2c5c" stroke-width=".8"/><path d="M4.8 1.2Q7.8 4.6 6.8 7.2Q5.8 9 3.8 8.4Q2 7.2 2.8 4.6Q3.6 2.8 4.8 1.2Z" fill="#f4f8ff"/><path d="M4.6 2.6Q5.8 5 5 7.4Q3.6 6 4.6 2.6Z" fill="#2048d8"/></svg>
<svg class="i" style="left:384.8px;top:53.1px" width="7" height="4" viewBox="0 0 7 4"><path d="M0.3 0.2H6L3.15 3.4Z" fill="#111"/></svg>
<div class="b" style="left:395px;top:47.5px;width:1px;height:14px;background:#cfcfcf;"></div>
<div class="g" style="left:397.5px;top:49.0px;height:11px"></div>
<div class="b" style="left:399.5px;top:48.0px;width:23px;height:14px;background:#e8e8e8;border:0.6px solid #cdcdcd;box-sizing:border-box;"></div>
<svg class="i" style="left:401.5px;top:49.5px" width="10" height="11" viewBox="0 0 10 11"><circle cx="4.8" cy="5.2" r="4.7" fill="#2638cc"/><path d="M2 8L8 2.6" stroke="#4a62e0" stroke-width="2.2"/></svg>
<svg class="i" style="left:412.8px;top:53.1px" width="7" height="4" viewBox="0 0 7 4"><path d="M0.3 0.2H6L3.15 3.4Z" fill="#111"/></svg>
<div class="b" style="left:423px;top:47.5px;width:1px;height:14px;background:#cfcfcf;"></div>
<div class="g" style="left:425.5px;top:49.0px;height:11px"></div>
<div class="b" style="left:427.5px;top:48.0px;width:23px;height:14px;background:#e8e8e8;border:0.6px solid #cdcdcd;box-sizing:border-box;"></div>
<svg class="i" style="left:429.5px;top:49.5px" width="10" height="11" viewBox="0 0 10 11"><circle cx="5" cy="5.2" r="4.5" fill="#b9d5f1" stroke="#8897aa" stroke-width=".8"/><circle cx="4" cy="4" r="2.3" fill="#eef6ff"/></svg>
<svg class="i" style="left:440.8px;top:53.1px" width="7" height="4" viewBox="0 0 7 4"><path d="M0.3 0.2H6L3.15 3.4Z" fill="#111"/></svg>
<div class="b" style="left:452px;top:47.5px;width:1px;height:14px;background:#cfcfcf;"></div>
<div class="g" style="left:454.5px;top:49.0px;height:11px"></div>
<div class="b" style="left:456.5px;top:48.0px;width:23px;height:14px;background:#e8e8e8;border:0.6px solid #cdcdcd;box-sizing:border-box;"></div>
<svg class="i" style="left:458.5px;top:49.5px" width="10" height="11" viewBox="0 0 10 11"><rect x=".6" y="1" width="8.4" height="8" rx="1.8" fill="#3ce04c" stroke="#1a6c1e" stroke-width="1"/><path d="M2.4 3.2H7M2.4 5H7M2.4 6.8H7" stroke="#a8f4b0" stroke-width=".8"/></svg>
<svg class="i" style="left:469.8px;top:53.1px" width="7" height="4" viewBox="0 0 7 4"><path d="M0.3 0.2H6L3.15 3.4Z" fill="#111"/></svg>
<div class="b" style="left:480.5px;top:47.5px;width:1px;height:14px;background:#cfcfcf;"></div>
<div class="g" style="left:483px;top:49.0px;height:11px"></div>
<div class="b" style="left:485px;top:48.0px;width:23px;height:14px;background:#e8e8e8;border:0.6px solid #cdcdcd;box-sizing:border-box;"></div>
<svg class="i" style="left:487px;top:49.5px" width="10" height="11" viewBox="0 0 10 11"><rect x=".6" y="1" width="8.4" height="8" rx="1.8" fill="#e2223c" stroke="#5c0c1c" stroke-width="1"/><path d="M3 3.4H7M3 6.4H6" stroke="#f08a98" stroke-width=".8"/></svg>
<svg class="i" style="left:498.3px;top:53.1px" width="7" height="4" viewBox="0 0 7 4"><path d="M0.3 0.2H6L3.15 3.4Z" fill="#111"/></svg>
<div class="b" style="left:509px;top:47.5px;width:1px;height:14px;background:#cfcfcf;"></div>
<div class="g" style="left:511.5px;top:49.0px;height:11px"></div>
<div class="b" style="left:514px;top:48.0px;width:23px;height:14px;background:#e8e8e8;border:0.6px solid #cdcdcd;box-sizing:border-box;"></div>
<svg class="i" style="left:516px;top:49.5px" width="10" height="11" viewBox="0 0 10 11"><rect x="1" y="1.6" width="8.6" height="6" rx="1.6" fill="#f6f6f6" stroke="#3e3e46" stroke-width="1.3"/><circle cx="3.4" cy="3.6" r="1" fill="#2a4ae0"/><circle cx="7.4" cy="3.6" r="1" fill="#e02a3a"/><path d="M3.4 5.8H7" stroke="#2ab03a" stroke-width="1.2"/></svg>
<svg class="i" style="left:527.3px;top:53.1px" width="7" height="4" viewBox="0 0 7 4"><path d="M0.3 0.2H6L3.15 3.4Z" fill="#111"/></svg>
<div class="b" style="left:538px;top:47.5px;width:1px;height:14px;background:#cfcfcf;"></div>
<div class="g" style="left:540.5px;top:49.0px;height:11px"></div>
<div class="b" style="left:542.5px;top:48.0px;width:23px;height:14px;background:#e8e8e8;border:0.6px solid #cdcdcd;box-sizing:border-box;"></div>
<svg class="i" style="left:544.5px;top:49.5px" width="10" height="11" viewBox="0 0 10 11"><path d="M3 .4L7 .2L6 3.6L8.6 3L5.2 9.6L5.6 5.6L2.6 6.4Z" fill="#f0703a" stroke="#c84020" stroke-width=".6"/></svg>
<svg class="i" style="left:555.8px;top:53.1px" width="7" height="4" viewBox="0 0 7 4"><path d="M0.3 0.2H6L3.15 3.4Z" fill="#111"/></svg>
<div class="b" style="left:143.5px;top:66px;width:14px;height:10.6px;background:#e1e1e1;border:0.8px solid #adadad;box-sizing:border-box;"></div>
<span class="t" style="left:146.3px;top:68.95px;font-size:7.5px;color:#222;transform:scaleX(0.999);letter-spacing:0.9px;">&lt;&lt;</span>
<div class="b" style="left:2.3px;top:84.8px;width:156.5px;height:323.8px;background:#fff;border:0.9px solid #b2b2b2;box-sizing:border-box;border-top-color:#9e9e9e;border-left-color:#a4a4a4;"></div>
<div class="b" style="left:16px;top:87.6px;width:59px;height:10.6px;background:#ececec;"></div>
<svg class="i" style="left:0;top:84px" width="30" height="52" viewBox="0 0 30 52"><path d="M10.5 14V44M10.5 20.5H16M10.5 32.5H16M10.5 44H16.5" stroke="#b4b4b4" stroke-width="0.8" fill="none"/></svg>
<svg class="i" style="left:5.8px;top:87.8px" width="8.4" height="9.6" viewBox="0 0 9 10"><rect x=".6" y=".8" width="7.2" height="8.4" fill="#fbfbf6" stroke="#2c2c2c" stroke-width="1"/><rect x="4.6" y=".4" width="3.2" height="1.8" fill="#86dc22"/><path d="M2.6 3V7H5.2M2.6 5H4.6" stroke="#1c1c1c" stroke-width=".9" fill="none"/><rect x="4.4" y="4.2" width="1.6" height="1.4" fill="#333"/><rect x="4.8" y="6.2" width="1.6" height="1.6" fill="#333"/></svg>
<svg class="i" style="left:16px;top:99px" width="10" height="10" viewBox="0 0 10 10"><rect x="1" y=".6" width="6.6" height="5.4" rx=".6" fill="#d4d6dc" stroke="#3e3e44" stroke-width="1"/><rect x="2.6" y="3.2" width="6.8" height="5.8" rx=".6" fill="#c4c6ce" stroke="#3e3e44" stroke-width="1"/><rect x="3.4" y="4.2" width="5.2" height="2" fill="#8c90a0"/><rect x="6.4" y="7" width="2.6" height="1.8" fill="#2c4cd4"/></svg>
<svg class="i" style="left:16px;top:111px" width="10" height="10" viewBox="0 0 10 10"><rect x="1" y=".6" width="6.6" height="5.4" rx=".6" fill="#d4d6dc" stroke="#3e3e44" stroke-width="1"/><rect x="2.6" y="3.2" width="6.8" height="5.8" rx=".6" fill="#c4c6ce" stroke="#3e3e44" stroke-width="1"/><rect x="3.4" y="4.2" width="5.2" height="2" fill="#8c90a0"/><rect x="6.4" y="7" width="2.6" height="1.8" fill="#2c4cd4"/></svg>
<svg class="i" style="left:17px;top:123.5px" width="10" height="9" viewBox="0 0 10 9"><path d="M.6 3.4L3 1.2L5 2.2L9.4 3.2L7 8L1.4 6.4Z" fill="#f0d22a" stroke="#a08410" stroke-width=".7"/><path d="M5.6 .6L9.4 2L6.6 3.4Z" fill="#28a030"/><path d="M1.6 4.6L6.6 6.2L8.4 3.8" stroke="#fff8b0" stroke-width=".7" fill="none"/></svg>
<span class="t" style="left:18px;top:88.22px;font-size:8.6px;color:#2a2a2a;transform:scaleX(0.86);">Project: "default"</span>
<span class="t" style="left:29px;top:100.12px;font-size:8.6px;color:#2a2a2a;transform:scaleX(0.86);">Path Settings</span>
<span class="t" style="left:29px;top:112.12px;font-size:8.6px;color:#2a2a2a;transform:scaleX(0.86);">Analysis Options</span>
<span class="t" style="left:29px;top:124.02px;font-size:8.6px;color:#2a2a2a;transform:scaleX(0.86);">Cooling systems</span>
<div class="b" style="left:159.7px;top:64px;width:1px;height:346px;background:#949494;"></div>
<div class="b" style="left:160.6px;top:63.6px;width:437.5px;height:309px;background:#fdfdfd;"></div>
<div class="b" style="left:216.5px;top:65.6px;width:381.3px;height:13.2px;background:#f2f2f2;"></div>
<div class="b" style="left:216.5px;top:65.5px;width:167px;height:13.5px;background:#f0f0f0;"></div>
<div class="b" style="left:216.5px;top:65.5px;width:167px;height:13.5px;border:0.6px solid #e2e2e2;box-sizing:border-box;"></div>
<div class="b" style="left:286px;top:66px;width:0.7px;height:12.5px;background:#dcdcdc;"></div>
<div class="b" style="left:326px;top:66px;width:0.7px;height:12.5px;background:#dcdcdc;"></div>
<svg class="i" style="left:164.8px;top:67.6px" width="7.2" height="9.2" viewBox="0 0 8 10"><path d="M.8 .6H5.2L7.4 2.8V9.4H.8Z" fill="#d4e0f2" stroke="#5c6c8c" stroke-width=".9"/><path d="M1.6 6L6.6 6V8.6H1.6Z" fill="#b2c6e2"/></svg>
<span class="t" style="left:175.3px;top:68.87px;font-size:8.3px;color:#111;transform:scaleX(0.815);">General data</span>
<svg class="i" style="left:218.5px;top:66.5px" width="10" height="11" viewBox="0 0 10 11"><rect x="3.4" y=".6" width="4" height="3.6" rx=".8" fill="#e6ecfa" stroke="#1c2c9c" stroke-width=".8"/><rect x="5.6" y="3" width="4" height="4" rx=".8" fill="#2c3cd0" stroke="#14207c" stroke-width=".8"/><circle cx="3.2" cy="6.6" r="2.8" fill="#2434c4" stroke="#101a6c" stroke-width=".7"/><circle cx="2.4" cy="5.8" r=".9" fill="#a8b8ff"/></svg>
<span class="t" style="left:231px;top:68.87px;font-size:8.3px;color:#1a1a1a;transform:scaleX(0.83);">Circuits / Air Path</span>
<svg class="i" style="left:288.8px;top:67.3px" width="9.4" height="10.3" viewBox="0 0 10 11"><path d="M2.7 7.5L7.7 3" stroke="#3a2a12" stroke-width="4.4" stroke-linecap="round"/><circle cx="7.8" cy="2.9" r="1.5" fill="#a8162a"/><circle cx="5.3" cy="5.2" r="1.8" fill="#22c02e"/><circle cx="2.8" cy="7.5" r="1.8" fill="#e8c014"/></svg>
<span class="t" style="left:300.5px;top:68.87px;font-size:8.3px;color:#111;transform:scaleX(0.86);">Air side</span>
<svg class="i" style="left:329px;top:67px" width="8.5" height="10" viewBox="0 0 9.5 10"><rect x=".5" y=".5" width="8.5" height="9" rx=".8" fill="#f01414" stroke="#6e5c5c" stroke-width="1"/><text x="1.7" y="7" font-size="5" font-weight="bold" fill="#4c0606" font-family="Liberation Sans, sans-serif" textLength="6.2" lengthAdjust="spacingAndGlyphs">SP</text></svg>
<span class="t" style="left:340px;top:68.87px;font-size:8.3px;color:#1a1a1a;transform:scaleX(0.84);">Simul. param.</span>
<div class="b" style="left:164px;top:84.5px;width:200.5px;height:280px;background:#fff;border:0.8px solid #d9d9d9;box-sizing:border-box;"></div>
<span class="t" style="left:167px;top:94.04px;font-size:8.1px;color:#0a0a0a;transform:scaleX(0.85);">User</span>
<div class="b" style="left:235.3px;top:91.3px;width:121.4px;height:11px;background:#fff;border:0.85px solid #9a9a9a;box-sizing:border-box;"></div>
<span class="t" style="left:167px;top:106.34px;font-size:8.1px;color:#0a0a0a;transform:scaleX(0.85);">Date (0=current)</span>
<div class="b" style="left:235.3px;top:103.6px;width:121.4px;height:11px;background:#fff;border:0.85px solid #9a9a9a;box-sizing:border-box;"></div>
<span class="t" style="left:167px;top:118.64px;font-size:8.1px;color:#0a0a0a;transform:scaleX(0.85);">Department</span>
<div class="b" style="left:235.3px;top:115.9px;width:121.4px;height:11px;background:#fff;border:0.85px solid #9a9a9a;box-sizing:border-box;"></div>
<span class="t" style="left:167px;top:130.94px;font-size:8.1px;color:#0a0a0a;transform:scaleX(0.85);">Purpose</span>
<div class="b" style="left:235.3px;top:128.2px;width:121.4px;height:11px;background:#fff;border:0.85px solid #9a9a9a;box-sizing:border-box;"></div>
<span class="t" style="left:167px;top:143.24px;font-size:8.1px;color:#0a0a0a;transform:scaleX(0.85);">Results</span>
<div class="b" style="left:235.3px;top:140.5px;width:121.4px;height:11px;background:#fff;border:0.85px solid #9a9a9a;box-sizing:border-box;"></div>
<span class="t" style="left:167px;top:155.54px;font-size:8.1px;color:#0a0a0a;transform:scaleX(0.85);">Report No.</span>
<div class="b" style="left:235.3px;top:152.8px;width:121.4px;height:11px;background:#fff;border:0.85px solid #9a9a9a;box-sizing:border-box;"></div>
<span class="t" style="left:238px;top:106.11px;font-size:7.9px;color:#1a1a1a;transform:scaleX(0.825);">2021-08-31 10:43:37</span>
<span class="t" style="left:167px;top:178.94px;font-size:8.1px;color:#0a0a0a;transform:scaleX(0.85);">Memo</span>
<div class="b" style="left:167px;top:189.4px;width:189.7px;height:167.2px;background:#fff;border:0.85px solid #9a9a9a;box-sizing:border-box;"></div>
<div class="b" style="left:346.5px;top:190.3px;width:9.3px;height:165.4px;background:#f0f0f0;"></div>
<svg class="i" style="left:346.5px;top:190px" width="10" height="166" viewBox="0 0 10 166"><path d="M2.8 7.3L5 5L7.2 7.3M2.8 159.3L5 161.6L7.2 159.3" stroke="#9a9a9a" stroke-width="0.9" fill="none"/><rect x="-0.8" y="110" width="10.2" height="1.6" fill="#111"/></svg>
<div class="b" style="left:369.5px;top:85px;width:225px;height:279px;background:#fff;border:1px solid #c2c2c2;box-sizing:border-box;border-top-color:#8c8c8c;border-bottom-color:#b0b0b0;"></div>
<div class="b" style="left:370.3px;top:86px;width:223.5px;height:18px;background:#f0f0f0;"></div>
<div class="b" style="left:370px;top:85px;width:224px;height:1px;background:#8a8a8a;"></div>
<div class="b" style="left:370px;top:104px;width:224px;height:0.9px;background:#a8a8a8;"></div>
<div class="b" style="left:369.5px;top:85px;width:1px;height:19.5px;background:#8a8a8a;"></div>
<span class="t" style="left:381.5px;top:86.96px;font-size:8.2px;color:#222;transform:scaleX(0.85);">ID</span>
<span class="t" style="left:542px;top:86.96px;font-size:8.2px;color:#222;transform:scaleX(0.85);">Width</span>
<span class="t" style="left:537.5px;top:95.86px;font-size:8.2px;color:#222;transform:scaleX(0.85);">Diameter</span>
<div class="b" style="left:580px;top:85px;width:13.6px;height:19px;overflow:hidden"><span class="t" style="left:4.5px;top:1.3px;font-size:8.2px;color:#222;transform:scaleX(.85)">Height</span><span class="t" style="left:6px;top:10.2px;font-size:8.2px;color:#222;transform:scaleX(.85)">[mm]</span></div>
<div class="b" style="left:370.3px;top:353.3px;width:223.5px;height:10px;background:#f0f0f0;"></div>
<div class="b" style="left:370.3px;top:353.3px;width:160px;height:0.8px;background:#c4c4c4;"></div>
<div class="b" style="left:540px;top:354.6px;width:10.5px;height:8.4px;background:#cdcdcd;"></div>
<svg class="i" style="left:530px;top:354px" width="64" height="10" viewBox="0 0 64 10"><path d="M5.6 2.6L3.3 4.9L5.6 7.2M58 2.6L60.3 4.9L58 7.2" stroke="#444" stroke-width="1.1" fill="none"/></svg>
<div class="b" style="left:376.8px;top:107.8px;width:207.4px;height:182.8px;background:#fff;box-shadow:0 2px 6px 0.5px rgba(0,0,0,.27);"></div>
<span class="t" style="left:382px;top:112.52px;font-size:8.6px;color:#222;transform:scaleX(0.86);">3D View</span>
<div class="b" style="left:572.6px;top:112.5px;width:10.7px;height:10.3px;background:#c9373f;"></div>
<span class="t" style="left:576.3px;top:114.94px;font-size:6.1px;color:#fff;transform:scaleX(1.0);font-weight:bold;">x</span>
<div class="b" style="left:378.5px;top:125.2px;width:12.8px;height:12.6px;background:#e7e7e7;border:0.7px solid #cfcfcf;box-sizing:border-box;"></div>
<svg class="i" style="left:379.9px;top:126.2px" width="10" height="10.5" viewBox="0 0 10 11"><circle cx="5.2" cy="5.4" r="3.7" fill="#5ab866"/><path d="M3.6 5.6A1.7 1.7 0 1 0 5.2 3.8" stroke="#c4eac8" stroke-width="1" fill="none"/><path d="M1 2.2L4.6 1L4.2 4.4Z" fill="#46a852"/></svg>
<div class="b" style="left:392.5px;top:125.2px;width:12.8px;height:12.6px;background:#e7e7e7;border:0.7px solid #cfcfcf;box-sizing:border-box;"></div>
<svg class="i" style="left:393.9px;top:126.2px" width="10" height="10.5" viewBox="0 0 10 11"><path d="M1 .6V9.4M.2 .8H1.8M.2 9.2H9.8M9 8.4V10" stroke="#111" stroke-width=".8" fill="none"/><rect x="2.6" y="2.4" width="5.8" height="5.6" rx="1" fill="#18b628" stroke="#0a5a12" stroke-width=".8"/></svg>
<div class="b" style="left:406.5px;top:125.2px;width:12.8px;height:12.6px;background:#e7e7e7;border:0.7px solid #cfcfcf;box-sizing:border-box;"></div>
<svg class="i" style="left:407.9px;top:126.2px" width="10" height="10.5" viewBox="0 0 10 11"><g fill="#6cca74"><path d="M0 0H3.4L2.4 1L3.8 2.4L2.4 3.8L1 2.4L0 3.4Z"/><path d="M10.4 0H7L8 1L6.6 2.4L8 3.8L9.4 2.4L10.4 3.4Z"/><path d="M0 10H3.4L2.4 9L3.8 7.6L2.4 6.2L1 7.6L0 6.6Z"/><path d="M10.4 10H7L8 9L6.6 7.6L8 6.2L9.4 7.6L10.4 6.6Z"/></g></svg>
<div class="b" style="left:420.5px;top:125.2px;width:12.8px;height:12.6px;background:#e7e7e7;border:0.7px solid #cfcfcf;box-sizing:border-box;"></div>
<svg class="i" style="left:421.9px;top:126.2px" width="10" height="10.5" viewBox="0 0 10 11"><rect x="2.6" y=".3" width="5" height="3.6" fill="#fff" stroke="#8b9bb3" stroke-width=".7"/><rect x=".6" y="3.6" width="9" height="3.6" rx=".8" fill="#c5d2e3" stroke="#69798f" stroke-width=".7"/><rect x="1.8" y="6.6" width="6.6" height="2.2" fill="#f1f4f9" stroke="#7a8aa0" stroke-width=".7"/></svg>
<div class="b" style="left:434.5px;top:125.2px;width:12.8px;height:12.6px;background:#e7e7e7;border:0.7px solid #cfcfcf;box-sizing:border-box;"></div>
<svg class="i" style="left:435.9px;top:126.2px" width="10" height="10.5" viewBox="0 0 10 11"><rect x="1" y="1.2" width="6" height="7.4" fill="#e2b422" stroke="#8c6c12" stroke-width=".8"/><rect x="2.6" y=".4" width="2.8" height="1.8" fill="#caa06a"/><rect x="4.6" y="4" width="5" height="4.8" fill="#dde9fa" stroke="#5878ae" stroke-width=".8"/></svg>
<div class="b" style="left:448.5px;top:125.2px;width:12.8px;height:12.6px;background:#e7e7e7;border:0.7px solid #cfcfcf;box-sizing:border-box;"></div>
<svg class="i" style="left:449.9px;top:126.2px" width="10" height="10.5" viewBox="0 0 10 11"><circle cx="4.2" cy="4" r="3.4" fill="#d2e6f6"/><path d="M.6 6.6H5" stroke="#e2485c" stroke-width="1.2"/><path d="M5.8 2V5.6M4 3.8H7.6" stroke="#4cb85a" stroke-width="1.6"/><path d="M5.6 5.8L7.8 7.2L5.6 8.2Z" fill="#d8a04a"/></svg>
<div class="b" style="left:462.5px;top:125.2px;width:12.8px;height:12.6px;background:#e7e7e7;border:0.7px solid #cfcfcf;box-sizing:border-box;"></div>
<svg class="i" style="left:463.9px;top:126.2px" width="10" height="10.5" viewBox="0 0 10 11"><rect x="1" y="1" width="8" height="7.6" rx="1.4" fill="#5656c2"/><rect x="3.2" y="1" width="3.6" height="2.6" fill="#f4f4ff"/><rect x="3.8" y="6.4" width="2.4" height="2.2" fill="#f4f4f4"/></svg>
<div class="b" style="left:476.3px;top:125.2px;width:40.6px;height:12.4px;background:#e1e1e1;border:0.8px solid #b9b9b9;box-sizing:border-box;"></div>
<span class="t" style="left:488.8px;top:127.86px;font-size:8.2px;color:#222;transform:scaleX(0.86);">View</span>
<div class="b" style="left:377.3px;top:140.6px;width:206.5px;height:149.8px;background:linear-gradient(#134c8c 0%,#2a62a0 17%,#4f82ba 37%,#7ba5d5 62%,#a9c8ee 84%,#c9dffa 100%);"></div>
<svg class="i" style="left:472px;top:207px" width="17" height="17" viewBox="0 0 17 17"><path d="M8.3 2.2L14.4 8.1L8.3 14L2.2 8.1ZM8.3 2.2V14M2.2 8.1H14.4" stroke="#1b3fd2" stroke-width="1" fill="none"/></svg>
<svg class="i" style="left:384px;top:219px" width="36" height="40" viewBox="0 0 36 40"><path d="M30 35V20A15 15 0 0 0 15 35Z" fill="#8d9db4"/><path d="M30 35V27A8 8 0 0 0 22 35Z" fill="#65788f"/><path d="M28.4 35.5V17.8H27L29.8 13.6L32.6 17.8H31.2V35.5Z" fill="#e0121a"/><path d="M27 17.8L29.8 13.6L32.6 17.8Z" fill="#8e0c12"/><path d="M30 33.8H13V32.4L8.4 35.3L13 38.2V36.8H30Z" fill="#14c61e"/><circle cx="30" cy="35.6" r="2.4" fill="#1a22d8"/><text x="27.6" y="10.2" font-size="10.4" fill="#e23a40" font-family="Liberation Sans, sans-serif" textLength="5" lengthAdjust="spacingAndGlyphs">Z</text><text x="2.2" y="35" font-size="10.4" fill="#27d53a" font-family="Liberation Sans, sans-serif" textLength="5" lengthAdjust="spacingAndGlyphs">Y</text></svg>
<div class="b" style="left:160.6px;top:372.5px;width:437.5px;height:1px;background:#959595;"></div>
<div class="b" style="left:160.6px;top:373.6px;width:437.5px;height:36px;background:#fff;"></div>
<div class="b" style="left:200.5px;top:374px;width:397.6px;height:13px;background:#f0f0f0;"></div>
<div class="b" style="left:200.5px;top:386.6px;width:397.6px;height:0.7px;background:#dedede;"></div>
<div class="b" style="left:258.3px;top:374.5px;width:0.7px;height:12px;background:#d6d6d6;"></div>
<svg class="i" style="left:164.5px;top:375.5px" width="8" height="10" viewBox="0 0 8 10"><rect x=".6" y=".6" width="6.8" height="8.8" fill="#fcfcf0" stroke="#3c3c2c" stroke-width=".9"/><path d="M2.2 8V4.4Q2.2 3 3.6 3H5.4V8" stroke="#b8a040" stroke-width=".9" fill="none"/><rect x="2.4" y="1.4" width="2" height="1.2" fill="#4aa04a"/></svg>
<span class="t" style="left:175.5px;top:377.87px;font-size:8.3px;color:#222;transform:scaleX(0.86);">Output</span>
<svg class="i" style="left:203.3px;top:375.8px" width="6.6" height="9.4" viewBox="0 0 8 10"><rect x=".4" y=".4" width="7.2" height="9.2" fill="#d6e6c6"/><path d="M2.6 2.4Q4 1 5.4 2.4Q5.6 3.8 4 4.4Q5.8 5 5.4 6.8Q4 8.2 2.6 6.8" stroke="#1c1c1c" stroke-width="1.3" fill="none"/></svg>
<span class="t" style="left:214px;top:377.87px;font-size:8.3px;color:#222;transform:scaleX(0.86);">System report</span>
<div class="b" style="left:160.6px;top:394px;width:437px;height:7.4px;overflow:hidden"><div class="b" style="left:7.4px;top:1.4px;width:36px;height:12px;border:0.8px solid #b4b4b4;box-sizing:border-box"></div><svg class="i" style="left:12px;top:4.4px" width="8" height="8" viewBox="0 0 8 8"><rect x=".5" y=".5" width="6" height="6" fill="none" stroke="#555" stroke-width=".9"/></svg><span class="t" style="left:22px;top:6.2px;font-size:8.2px;color:#333;transform:scaleX(.86)">Check</span><div class="b" style="left:103.4px;top:1.4px;width:174.7px;height:12px;border:0.8px solid #b4b4b4;box-sizing:border-box"></div><span class="t" style="left:106.4px;top:6.2px;font-size:8.2px;color:#333;transform:scaleX(.86)">Select simulation</span><svg class="i" style="left:271.6px;top:6.4px" width="5" height="3" viewBox="0 0 5 3"><path d="M0 0H5L2.5 2.6Z" fill="#333"/></svg><div class="b" style="left:281.2px;top:1.4px;width:53.4px;height:12px;border:0.8px solid #b4b4b4;box-sizing:border-box"></div><svg class="i" style="left:284.6px;top:4.4px" width="8" height="8" viewBox="0 0 8 8"><rect x=".5" y=".5" width="6.4" height="6" fill="#e8e8e8" stroke="#777" stroke-width=".8"/><rect x="3.6" y=".6" width="3" height="3" fill="#666"/></svg><span class="t" style="left:296.4px;top:6.2px;font-size:8.2px;color:#333;transform:scaleX(.86)">Auto scroll</span><div class="b" style="left:337.4px;top:1.4px;width:53.6px;height:12px;border:0.8px solid #b4b4b4;box-sizing:border-box"></div><svg class="i" style="left:341px;top:4.4px" width="8" height="8" viewBox="0 0 8 8"><rect x=".5" y=".5" width="6.4" height="6" fill="#e8e8e8" stroke="#777" stroke-width=".8"/><rect x="3.6" y=".6" width="3" height="3" fill="#666"/></svg><span class="t" style="left:352.6px;top:6.2px;font-size:8.2px;color:#333;transform:scaleX(.86)">Auto select</span><div class="b" style="left:393.9px;top:1.4px;width:36.6px;height:12px;border:0.8px solid #b4b4b4;box-sizing:border-box"></div><svg class="i" style="left:397.4px;top:4.4px" width="8" height="8" viewBox="0 0 8 8"><rect x=".5" y=".5" width="6.4" height="6" fill="#e8e8e8" stroke="#777" stroke-width=".8"/><rect x="3.6" y=".6" width="3" height="3" fill="#666"/></svg><span class="t" style="left:408.6px;top:6.2px;font-size:8.2px;color:#333;transform:scaleX(.86)">Clear</span></div>
<div class="b" style="left:159.4px;top:409.4px;width:440px;height:1.1px;background:#8e8e8e;"></div>
<div class="b" style="left:0px;top:410.5px;width:600px;height:13.5px;background:#f0f0f0;"></div>
<div class="b" style="left:0px;top:410px;width:160px;height:1px;background:#a8a8a8;"></div>
<span class="t" style="left:3px;top:413.34px;font-size:8.1px;color:#1a1a1a;transform:scaleX(0.8);">Ready</span>
<div class="b" style="left:0px;top:422.6px;width:600px;height:1.4px;background:#fafcfe;"></div>
<svg class="i" style="left:588px;top:413px" width="9" height="9" viewBox="0 0 9 9"><g fill="#b9b9b9"><rect x="6.5" y="1" width="1.2" height="1.2"/><rect x="6.5" y="3.7" width="1.2" height="1.2"/><rect x="3.8" y="3.7" width="1.2" height="1.2"/><rect x="6.5" y="6.4" width="1.2" height="1.2"/><rect x="3.8" y="6.4" width="1.2" height="1.2"/><rect x="1.1" y="6.4" width="1.2" height="1.2"/></g></svg>
<div class="b" style="left:0px;top:1px;width:0.9px;height:423px;background:#bcd0d6;"></div>
<div class="b" style="left:598.6px;top:0px;width:1.4px;height:424px;background:linear-gradient(#8d97a8 0,#8d97a8 30px,#8a9bb8 30px,#8a9bb8 62px,#2f6bc4 62px,#2f6bc4 85px,#b6c8e2 85px,#b6c8e2 300px,#e6e9ee 330px,#e6e9ee 100%);"></div>
<div class="b" style="left:597.8px;top:0px;width:0.8px;height:424px;background:#dfe5ee;"></div>
</body></html>
